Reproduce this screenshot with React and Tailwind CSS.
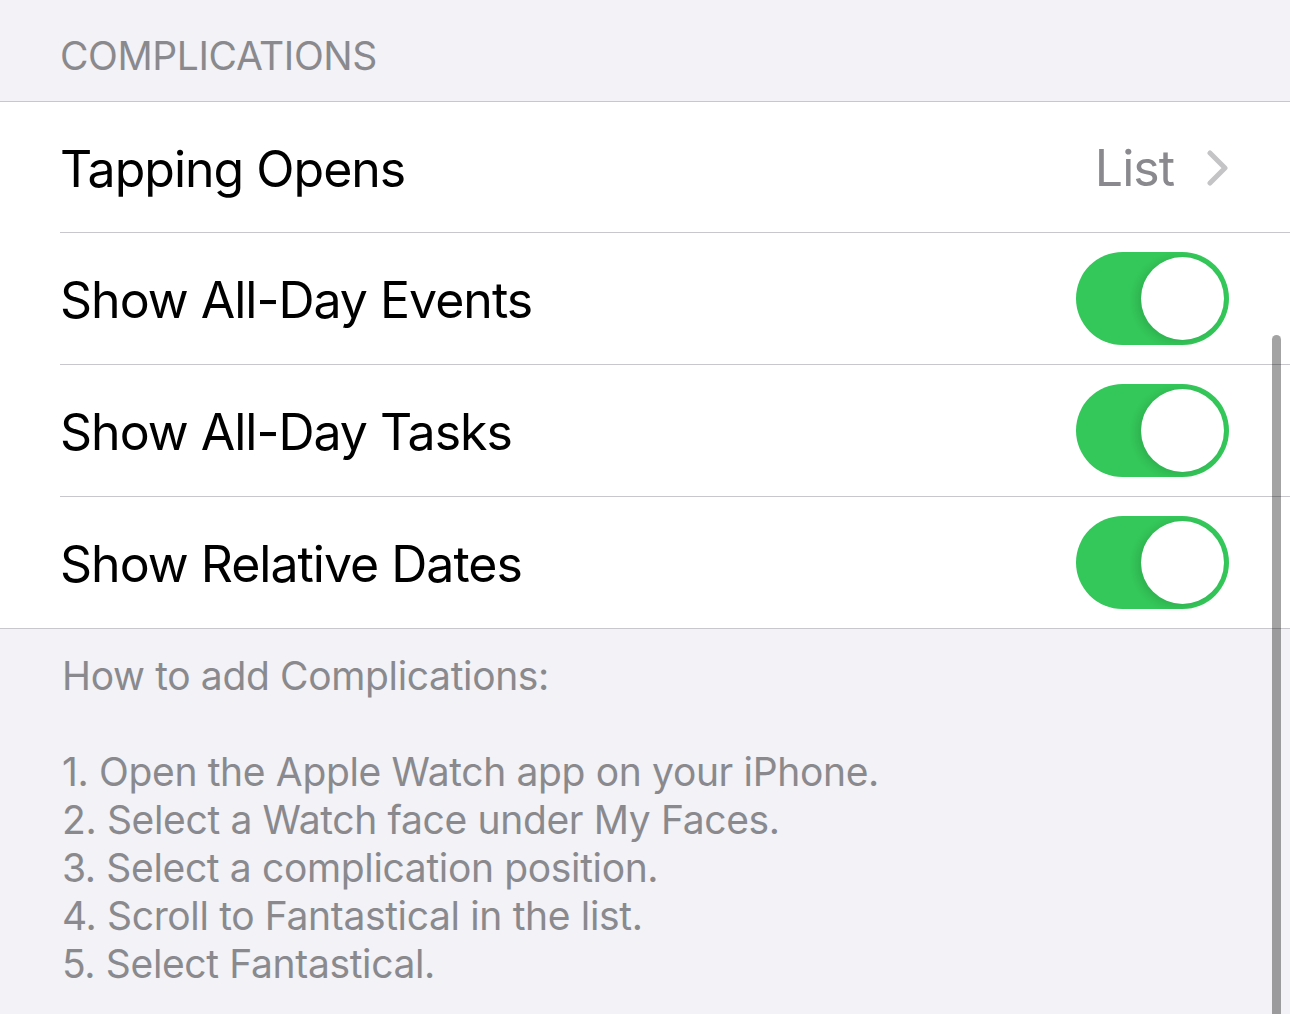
import React from 'react';

const font = { fontFamily: 'Inter, "Noto Sans", sans-serif' };

const Toggle = () => (
    <div className="relative h-[93px] w-[153px] rounded-full bg-[#34c759]">
        <div className="absolute right-[5px] top-[5px] h-[83px] w-[83px] rounded-full bg-white shadow-[-4px_2px_8px_rgba(0,0,0,0.12)]" />
    </div>
);

const Row = ({ label, children, h, last }) => (
    <div className={'ml-[60px] flex items-center justify-between pr-[61px] ' + h + (last ? '' : ' border-b border-[#c8c7cc]')}>
        <span className="mt-[4px] text-[50px] tracking-[-1px] text-black">{label}</span>
        {children}
    </div>
);

export default function App() {
    return (
        <div className="relative h-[1014px] w-[1290px] overflow-hidden bg-[#f2f2f7]" style={font}>
            {/* section header */}
            <div className="h-[101px] pl-[60px] pt-[34px] text-[39px] leading-[44px] tracking-[-0.4px] text-[#8a8a8e]">
                COMPLICATIONS
            </div>

            <div className="border-y border-[#c8c7cc] bg-white">
                <Row label="Tapping Opens" h="h-[131px]">
                    <div className="mt-[2px] flex items-center gap-[33px]">
                        <span className="text-[50px] tracking-[-1px] text-[#8a8a8e]">List</span>
                        <svg width="22" height="36" viewBox="0 0 22 36" fill="none">
                            <path d="M3 3 L18 18 L3 33" stroke="#c4c4c7" strokeWidth="5" strokeLinecap="round" strokeLinejoin="round" />
                        </svg>
                    </div>
                </Row>
                <Row label="Show All-Day Events" h="h-[132px]"><Toggle /></Row>
                <Row label="Show All-Day Tasks" h="h-[132px]"><Toggle /></Row>
                <Row label="Show Relative Dates" h="h-[131px]" last><Toggle /></Row>
            </div>

            {/* footer */}
            <div className="whitespace-pre-line pl-[62px] pt-[23px] text-[39px] leading-[48px] tracking-[-0.35px] text-[#8a8a8e]">
                {'How to add Complications:\n\n1. Open the Apple Watch app on your iPhone.\n2. Select a Watch face under My Faces.\n3. Select a complication position.\n4. Scroll to Fantastical in the list.\n5. Select Fantastical.'}
            </div>

            {/* scroll indicator */}
            <div className="absolute bottom-[-10px] right-[9px] top-[335px] w-[9px] rounded-full bg-black/[0.36]" />
        </div>
    );
}
